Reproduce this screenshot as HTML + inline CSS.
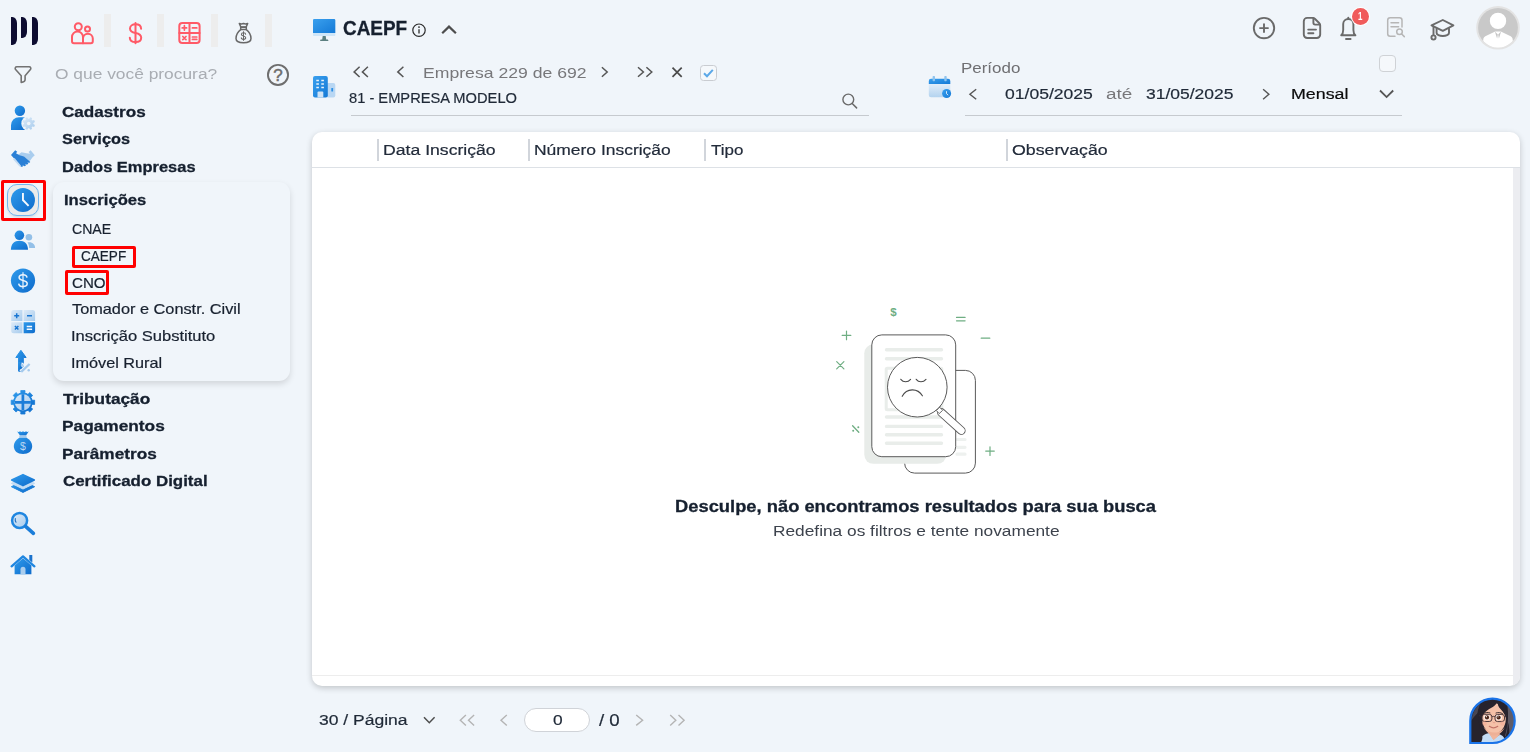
<!DOCTYPE html>
<html lang="pt-BR">
<head>
<meta charset="utf-8">
<title>CAEPF</title>
<style>
*{box-sizing:border-box;margin:0;padding:0}
html,body{width:1530px;height:752px;overflow:hidden;background:#f0f5fa;font-family:"Liberation Sans",sans-serif;color:#1b2536}
.abs{position:absolute}
.t{position:absolute;white-space:nowrap;line-height:1;transform-origin:0 0}
.redbox{position:absolute;border:3px solid #ff0000;border-radius:2px}
.colsep{position:absolute;top:138.5px;width:2px;height:22px;background:#d1d5db}
.qsep{position:absolute;top:14px;width:7px;height:33px;background:#ededed}
svg{position:absolute;overflow:visible}
.lg{position:absolute;background:#0d0c30;top:17px;width:6px;border-radius:0 4.6px 4.6px 0 / 0 6px 6px 0}
</style>
</head>
<body>
<!-- logo -->
<div class="lg" style="left:11px;height:28px"></div>
<div class="lg" style="left:21.2px;height:21px;width:6.2px"></div>
<div class="lg" style="left:32px;height:28px"></div>

<!-- quick separators -->
<div class="qsep" style="left:103.5px"></div>
<div class="qsep" style="left:157px"></div>
<div class="qsep" style="left:211px"></div>
<div class="qsep" style="left:265px"></div>

<!--QUICKICONS-->
<svg style="left:0;top:0" width="1530" height="752" viewBox="0 0 1530 752" fill="none">
<defs>
<linearGradient id="gb" x1="0" y1="0" x2="1" y2="1"><stop offset="0" stop-color="#2f9bec"/><stop offset="1" stop-color="#0f6ccc"/></linearGradient>
<linearGradient id="gl" x1="0" y1="0" x2="1" y2="1"><stop offset="0" stop-color="#dbe9f7"/><stop offset="1" stop-color="#a9cdee"/></linearGradient>
</defs>
<!-- people -->
<g stroke="#ff5a67" stroke-width="2" stroke-linejoin="round" stroke-linecap="round">
<circle cx="78.3" cy="26.8" r="3.5"/>
<path d="M72 41.2V37a5.5 5.5 0 0 1 11 0v6.2H74a2 2 0 0 1-2-2Z"/>
<circle cx="87.5" cy="29.1" r="2.5"/>
<path d="M83 38.6a4.9 4.9 0 0 1 9.8 0v2.6a2 2 0 0 1-2 2H83"/>
<!-- dollar -->
<path d="M135.5 22.9V43.3"/>
<path d="M141.1 28.7C141 25.6 138.6 24.3 135.5 24.3C132.3 24.3 130 26 130 28.6C130 31.5 132.5 32.5 135.5 33.1C138.8 33.8 141.2 34.9 141.2 37.8C141.2 40.5 138.8 42.1 135.5 42.1C132.2 42.1 129.9 40.6 129.8 37.7"/>
<!-- calculator -->
<rect x="179.3" y="22.9" width="20.3" height="20.2" rx="3"/>
<path d="M189.5 22.9V43.1M179.3 33H199.6"/>
<path d="M182.2 27.9h4.4M184.4 25.7v4.4M192.4 27.9h4.4M182.8 36.5l3.2 3.2M186 36.5l-3.2 3.2M192.4 37h4.4M192.4 39.4h4.4" stroke-width="1.7"/>
</g>
<!-- money bag (gray) -->
<g stroke="#686868" stroke-width="1.5" stroke-linejoin="round" stroke-linecap="round">
<path d="M239.3 23.5c1.5.6 2.8.6 4.2 0c1.400.6 2.700.6 4.200 0l-1.600 3.600h-5.200Z"/>
<path d="M240.700 27.300h5.600v2.300h-5.600Z"/>
<path d="M240.7 29.6c-2.800 2.200-4.700 5.600-4.700 8.900c0 2.800 2.200 4.200 7.500 4.200s7.500-1.400 7.500-4.200c0-3.300-1.900-6.700-4.700-8.900"/>
<path d="M243.5 31.7v8.700" stroke-width="1"/>
<path d="M245.6 34.300c0-1-.9-1.500-2.100-1.500s-2.100.6-2.100 1.600c0 2.200 4.300 1.100 4.300 3.400c0 1-.9 1.600-2.200 1.600s-2.200-.6-2.200-1.600" stroke-width="1.100"/>
</g>
<!-- filter -->
<path d="M16.800 66.800H29.200a1.600 1.600 0 0 1 1.200 2.700L25.100 75.700V79.500c0 1.600-1.800 2.700-3.900 2.900V75.700L15.600 69.500a1.600 1.600 0 0 1 1.200-2.700Z" stroke="#737373" stroke-width="1.600" stroke-linejoin="round"/>
<!-- help -->
<circle cx="278" cy="74.900" r="10.050" stroke="#6e6e6e" stroke-width="1.900"/>
<text x="278" y="81.100" font-family="Liberation Sans, sans-serif" font-size="17" fill="#6e6e6e" stroke="#6e6e6e" stroke-width=".5" text-anchor="middle">?</text>
</svg>


<svg style="left:0;top:0" width="1530" height="752" viewBox="0 0 1530 752" fill="none">
<defs>
<linearGradient id="sb" x1="0" y1="0" x2="1" y2="1"><stop offset="0" stop-color="#2f9bec"/><stop offset="1" stop-color="#0e6bcb"/></linearGradient>
<linearGradient id="sl" x1="0" y1="0" x2="1" y2="1"><stop offset="0" stop-color="#deebf8"/><stop offset="1" stop-color="#a6cbed"/></linearGradient>
<filter id="bsh" x="-30%" y="-30%" width="160%" height="170%"><feGaussianBlur stdDeviation="1.6"/></filter>
</defs>
<!-- user gear -->
<circle cx="19.9" cy="110.800" r="5.200" fill="url(#sb)"/>
<path d="M11 130v-4.800a8 8 0 0 1 8-8h3.500c1.500 0 2.800.4 3.900 1.100L26.400 130Z" fill="url(#sb)"/>
<circle cx="28.700" cy="123.500" r="7.400" fill="#f0f5fa"/>
<path d="M33.36 124.09L34.93 124.95L34.13 126.89L32.41 126.38L31.58 127.21L32.09 128.93L30.15 129.73L29.29 128.16L28.11 128.16L27.25 129.73L25.31 128.93L25.82 127.21L24.99 126.38L23.27 126.89L22.47 124.95L24.04 124.09L24.04 122.91L22.47 122.05L23.27 120.11L24.99 120.62L25.82 119.79L25.31 118.07L27.25 117.27L28.11 118.84L29.29 118.84L30.15 117.27L32.09 118.07L31.58 119.79L32.41 120.62L34.13 120.11L34.93 122.05L33.36 122.91Z" fill="url(#sl)"/>
<circle cx="28.700" cy="123.500" r="1.800" fill="#f0f5fa"/>
<!-- handshake -->
<path d="M34.800 155.200L30.600 150.200L28.600 151.900L30 153.700L26.500 153.200L21.500 152.300L17.500 155.200L23.500 156.700L29.300 161.800L32.600 157.200Z" fill="#a9cdee"/>
<path d="M11 155L15.200 150.200L17.200 151.700L16 153.200L19.500 155.300L24 156.400L30.300 161.900L29 163L27.500 162L28.300 163.700L26.800 164.800L25.300 163.800L26 165.500L24.300 166.300L22.800 165.200L22.700 166.800L21 166.700L13 157.300Z" fill="#2a80d6"/>
<path d="M13 159.200L14.600 158L21 165.800L19.500 166.500Z" fill="#c3dbf2"/>
<!-- clock button -->
<rect x="8" y="187" width="30" height="30" rx="9" fill="#9aa3ad" opacity=".45" filter="url(#bsh)"/>
<rect x="7.500" y="184.500" width="31" height="31" rx="9.500" fill="#ebebeb" stroke="#72b5ee" stroke-width="1"/>
<circle cx="22.950" cy="199.950" r="12" fill="url(#sb)"/>
<path d="M22.950 193V200L28.600 205.800" stroke="#f4f9fe" stroke-width="1.900" stroke-linejoin="miter"/>
<!-- users -->
<circle cx="28.900" cy="237.300" r="3.300" fill="#93c0e8"/>
<path d="M27.500 242.300c4.800-.8 7.600 1.800 7.600 5.700H29.200c-.2-2.400-.7-4.200-1.700-5.700Z" fill="#93c0e8"/>
<circle cx="19.400" cy="235.300" r="4.800" fill="url(#sb)"/>
<path d="M10.900 249.800c0-6 3.400-9.100 8.500-9.100s8.600 3.100 8.600 9.100Z" fill="url(#sb)"/>
<!-- dollar circle -->
<circle cx="23" cy="280.600" r="12.100" fill="url(#sb)"/>
<path d="M23 272.300V288.700" stroke="#eaf3fc" stroke-width="1.200"/>
<path d="M27 277.600c-.2-1.900-1.700-2.900-4-2.900s-3.900 1.100-3.900 2.900c0 3.900 8.100 1.900 8.100 6c0 1.900-1.700 3-4.200 3s-4.100-1.100-4.300-3" stroke="#eaf3fc" stroke-width="1.500"/>
<!-- calc -->
<path d="M13.700 310h8.700v11H11.200v-8.500a2.500 2.500 0 0 1 2.500-2.500Z" fill="url(#sl)"/>
<path d="M23.600 310h9a2.500 2.500 0 0 1 2.500 2.500V321H23.600Z" fill="url(#sl)"/>
<path d="M11.200 322.200h11.200v11.100H13.700a2.500 2.500 0 0 1-2.500-2.500Z" fill="url(#sl)"/>
<path d="M23.600 322.200h11.500v8.600a2.500 2.500 0 0 1-2.500 2.500H23.600Z" fill="url(#sb)"/>
<path d="M14.200 315.700h5M16.700 313.200v5M27 315.700h5M14.900 326l3.500 3.500M18.400 326l-3.500 3.500" stroke="#1976d2" stroke-width="1.500"/>
<path d="M26.700 326.500h5.400M26.700 329.200h5.400" stroke="#f4f9fe" stroke-width="1.500"/>
<!-- arrow percent -->
<path d="M20.900 350.300L26.100 357.500H23.300V371.200H18.600V357.500H15.800Z" fill="url(#sb)" stroke="url(#sb)" stroke-width="1" stroke-linejoin="round"/>
<path d="M21 372L29.700 364" stroke="#f0f5fa" stroke-width="4.600"/>
<circle cx="21.700" cy="364.800" r="2.300" fill="#f0f5fa"/>
<path d="M18.500 362h3v7h-3Z" fill="url(#sb)"/>
<path d="M21.200 371.800L29.600 364" stroke="#a3c9ec" stroke-width="2.300"/>
<circle cx="21.900" cy="364.900" r="1.200" fill="#a3c9ec"/>
<circle cx="28.700" cy="370.200" r="1.200" fill="#a3c9ec"/>
<!-- gear cross -->
<path d="M31.99 400.34L34.61 400.16L34.61 404.44L31.99 404.26L30.71 407.34L32.69 409.07L29.67 412.09L27.94 410.11L24.86 411.39L25.04 414.01L20.76 414.01L20.94 411.39L17.86 410.11L16.13 412.09L13.11 409.07L15.09 407.34L13.81 404.26L11.19 404.44L11.19 400.16L13.81 400.34L15.09 397.26L13.11 395.53L16.13 392.51L17.86 394.49L20.94 393.21L20.76 390.59L25.04 390.59L24.86 393.21L27.94 394.49L29.67 392.51L32.69 395.53L30.71 397.26Z" fill="url(#sb)" stroke="url(#sb)" stroke-width=".8" stroke-linejoin="round"/>
<circle cx="22.900" cy="402.300" r="9.700" fill="url(#sb)"/>
<circle cx="22.900" cy="402.300" r="8.100" fill="url(#sl)"/>
<path d="M22.900 394.300V410.300M14.900 402.300H30.900" stroke="#1b7dd9" stroke-width="2.700"/>

<!-- money bag -->
<path d="M17 431.300c1.100 .8 2 .8 3 0c1 .8 2 .8 3 0c1 .8 2 .8 3 0c1 .8 1.900 .8 2.900 0L26 435.500H20Z" fill="url(#sb)"/>
<path d="M19.300 435.500h7.300v2.200h-7.300Z" fill="#a3c9ec"/>
<path d="M19.300 437.700h7.300c3.600 2 5.600 5 5.600 8.300c0 5-3.600 8-9.200 8s-9.200-3-9.200-8c0-3.300 2-6.300 5.500-8.300Z" fill="url(#sb)"/>
<text x="23" y="450.300" font-family="Liberation Sans, sans-serif" font-size="10.500" fill="#b9d7f3" text-anchor="middle">$</text>
<!-- layers -->
<path d="M23 481.200L34.600 486.700L23 492.400L11.400 486.700Z" fill="url(#sb)" stroke="url(#sb)" stroke-width="1" stroke-linejoin="round"/>
<path d="M23 477.800L34.600 483.400L23 489L11.400 483.400Z" fill="#c3dcf4" stroke="#c3dcf4" stroke-width="1" stroke-linejoin="round"/>
<path d="M23 474.600L34.300 480L23 485.600L11.700 480Z" fill="url(#sb)" stroke="url(#sb)" stroke-width="1.600" stroke-linejoin="round"/>
<!-- magnifier -->
<circle cx="19.600" cy="520.500" r="7.500" fill="url(#sl)" stroke="#1f86e0" stroke-width="2.500"/>
<path d="M15.300 518.500c-.3 1.400 0 2.600 .7 3.700" stroke="#1f6fc0" stroke-width="1.100" stroke-linecap="round"/>
<path d="M25.600 526.300L33.400 533.300" stroke="#1b7dd9" stroke-width="3.600" stroke-linecap="round"/>
<!-- home -->
<path d="M29.300 555h3v7.500l-3-2.600Z" fill="#1b72cc"/>
<path d="M14.600 565.600L23 558.300L31.400 565.600V574.200H14.600Z" fill="url(#sb)"/>
<path d="M11.600 566.300L23 556.400L34.400 566.300" stroke="#1f86e0" stroke-width="2.300" stroke-linecap="round" stroke-linejoin="round"/>
<path d="M20.500 574.200v-5a2.500 2.500 0 0 1 5 0v5Z" fill="#a9cdee"/>
</svg>


<!-- submenu card -->
<div class="abs" style="left:53px;top:182px;width:237px;height:199px;border-radius:11px;background:#f0f5fa;box-shadow:0 3px 6px rgba(0,0,0,.13)"></div>
<div class="redbox" style="left:72px;top:246px;width:64px;height:22px"></div>
<div class="redbox" style="left:65px;top:270px;width:44px;height:25px"></div>
<div class="redbox" style="left:1px;top:180px;width:45px;height:41px"></div>

<div class="abs" style="left:700px;top:65px;width:16.5px;height:16px;border:1px solid #c9ccd1;border-radius:3.5px;background:#f5f8fb"></div>
<div class="abs" style="left:1379px;top:55px;width:17px;height:17px;border:1px solid #cfd2d6;border-radius:4px;background:#f5f8fb"></div>
<svg style="left:0;top:0" width="1530" height="752" viewBox="0 0 1530 752" fill="none">
<defs>
<linearGradient id="gmon" x1="0" y1="0" x2="1" y2="1"><stop offset="0" stop-color="#3aa0ee"/><stop offset="1" stop-color="#1479d6"/></linearGradient>
<linearGradient id="gcal" x1="0" y1="0" x2="0" y2="1"><stop offset="0" stop-color="#e3eefa"/><stop offset="1" stop-color="#b3d3ef"/></linearGradient>
<clipPath id="avc"><circle cx="1498" cy="27.800" r="19.900"/></clipPath>
</defs>
<!-- monitor -->
<path d="M320 40.900h8.500l-.6-1.300h-1.700l-.5-3.600h-3l-.5 3.600h-1.600Z" fill="#5b7f80"/>
<rect x="313" y="19.100" width="22.300" height="17" rx="1.200" fill="#cfe6f8"/>
<path d="M313 20.300a1.200 1.200 0 0 1 1.200-1.200h19.900a1.200 1.200 0 0 1 1.200 1.200V33H313Z" fill="url(#gmon)"/>
<!-- info -->
<circle cx="419" cy="30.200" r="6.200" stroke="#2b2b2b" stroke-width="1.200"/>
<circle cx="419" cy="27.100" r=".9" fill="#2b2b2b"/>
<path d="M419 29.300V33.500" stroke="#2b2b2b" stroke-width="1.300"/>
<!-- caret up -->
<path d="M442.200 33.200L449 26.600L455.900 33.200" stroke="#4d4d4d" stroke-width="2.200"/>
<!-- building -->
<rect x="326" y="83" width="9.300" height="14.500" rx="2" fill="#b9d7f3"/>
<rect x="331.300" y="88" width="1.800" height="3.400" rx=".5" fill="#2a8fe6"/>
<rect x="313" y="76" width="14.800" height="21.500" rx="2" fill="url(#gmon)"/>
<path d="M316.300 79.800h2.600v1.500h-2.600ZM321.300 79.800h2.600v1.500h-2.600ZM316.300 83.300h2.600v1.500h-2.600ZM321.300 83.300h2.600v1.500h-2.600ZM316.300 86.800h2.600v1.500h-2.600ZM321.300 86.800h2.600v1.500h-2.600Z" fill="#eaf3fb"/>
<path d="M317.500 97.500v-5a1 1 0 0 1 1-1h3.800a1 1 0 0 1 1 1v5Z" fill="#cfe3f6"/>
<!-- nav chevrons -->
<g stroke="#555" stroke-width="1.500">
<path d="M359.600 66.800L354.100 71.900L359.600 77M367.900 66.800L362.400 71.900L367.900 77"/>
<path d="M403.400 66.800L397.800 71.900L403.400 77"/>
<path d="M601.900 67.200L607.200 72L601.900 76.800"/>
<path d="M638 67.200L643.400 72L638 76.800M646.400 67.200L651.800 72L646.400 76.800"/>
<path d="M672.500 67.700L681.700 76.800M681.700 67.700L672.500 76.800" stroke-width="1.700" stroke="#4a4a4a"/>
</g>
<path d="M704 73.200L707 76.200L712.800 69.900" stroke="#5ba8e8" stroke-width="2"/>
<!-- search -->
<circle cx="848.300" cy="99.500" r="5.400" stroke="#6a6a6a" stroke-width="1.400"/>
<path d="M852.200 103.500L856.600 107.900" stroke="#6a6a6a" stroke-width="1.500" stroke-linecap="round"/>
<!-- calendar -->
<path d="M928.800 83.500H950.300V95a2.200 2.200 0 0 1-2.200 2.200H931a2.200 2.200 0 0 1-2.200-2.200Z" fill="url(#gcal)"/>
<path d="M928.800 81a2.200 2.200 0 0 1 2.200-2.200h17.100a2.200 2.200 0 0 1 2.200 2.200V84H928.800Z" fill="url(#gmon)"/>
<rect x="932.600" y="76" width="2.400" height="5.200" rx=".8" fill="#8ec3ee"/>
<rect x="944.300" y="76" width="2.400" height="5.200" rx=".8" fill="#8ec3ee"/>
<circle cx="946.600" cy="93.500" r="4.500" fill="url(#gmon)"/>
<path d="M946.500 91.200V93.700L948.200 95.200" stroke="#e8f2fc" stroke-width=".9"/>
<!-- period arrows -->
<g stroke="#555" stroke-width="1.400">
<path d="M976.200 89.200L969.900 94.200L976.200 99.300"/>
<path d="M1263.100 89.200L1268.900 94.200L1263.100 99.300"/>
<path d="M1380 90.500L1386.600 97.100L1393.200 90.500" stroke-width="1.800" stroke="#555"/>
</g>
<!-- top right -->
<g stroke="#6a6a6a" stroke-width="1.900" stroke-linecap="round" stroke-linejoin="round">
<circle cx="1264" cy="28.100" r="10.200"/>
<path d="M1260 28.100H1268M1264 24.100V32.100"/>
<path d="M1307.200 17.900H1312.500c1 0 1.900.4 2.600 1.100l4 4c.7.700 1.100 1.600 1.100 2.600V34.600a3.400 3.400 0 0 1-3.400 3.400H1307.200a3.400 3.400 0 0 1-3.400-3.400V21.300a3.400 3.400 0 0 1 3.400-3.400Z"/>
<path d="M1313.400 18.300V22.800a1.800 1.800 0 0 0 1.800 1.800H1319.800"/>
<path d="M1308.200 29.600H1316M1308.200 33.300H1313.400"/>
<path d="M1341.200 35.300c1.500-1.200 2-2.900 2-5.300V24a5.100 5.100 0 0 1 10.200 0v6c0 2.400.5 4.100 2 5.300Z"/>
<path d="M1348.300 17.600V18.800M1346 39H1350.600"/>
<path d="M1431.500 25.400L1442.800 20L1453.400 25.400L1442.800 30.900Z"/>
<path d="M1436.600 28.400V33c0 1.600 2.800 3 6.200 3s6.200-1.400 6.200-3V28.400"/>
<path d="M1433.500 26.600V35"/>
<circle cx="1433.500" cy="37.500" r="2.100"/>
</g>
<g stroke="#b6b6b6" stroke-width="1.500" stroke-linecap="round" stroke-linejoin="round">
<path d="M1395 36.300H1390.200a2.500 2.500 0 0 1-2.500-2.500V20.300a2.500 2.500 0 0 1 2.500-2.500H1399.500a2.500 2.500 0 0 1 2.500 2.500V27"/>
<path d="M1391 22.800H1398.600M1391 26.700H1398.600"/>
<circle cx="1399.500" cy="31.800" r="2.800"/>
<path d="M1401.700 34L1404.300 36.600"/>
</g>
<!-- badge -->
<circle cx="1360.500" cy="16.500" r="9.600" fill="#fff"/>
<circle cx="1360.500" cy="16.500" r="8.500" fill="#f05b5b"/>
<!-- avatar -->
<circle cx="1498" cy="27.800" r="21.800" fill="#e3e3e3"/>
<circle cx="1498" cy="27.800" r="19.900" fill="#c9c9c9"/>
<g clip-path="url(#avc)">
<circle cx="1498" cy="20.900" r="8.200" fill="#fff"/>
<path d="M1483.200 50V40.300c0-2.300 1.300-3.800 3.700-4.700l8.300-4.100h5.600l8.300 4.100c2.400.9 3.700 2.400 3.700 4.700V50Z" fill="#fff"/>
<path d="M1494.900 31.400l2.200 7.200l.7-4.200Z" fill="#c4c4c4"/>
<path d="M1501.100 31.400l-2.200 7.200l-.7-4.200Z" fill="#c4c4c4"/>
</g>
</svg>


<!-- company / period lines -->
<div class="abs" style="left:351px;top:115px;width:518px;height:1px;background:#c6cacf"></div>
<div class="abs" style="left:965px;top:115px;width:437px;height:1px;background:#c6cacf"></div>

<!-- TABLE CARD -->
<div class="abs" style="left:312px;top:132px;width:1208px;height:554px;background:#fff;border-radius:10px;box-shadow:0 2px 6px rgba(0,0,0,.2);overflow:hidden">
<div class="abs" style="left:0;top:35px;width:1208px;height:1px;background:#dde1e6"></div>
<div class="abs" style="left:1201px;top:36px;width:7px;height:520px;background:#ecedf1"></div>
<div class="abs" style="left:0;top:543px;width:1201px;height:1px;background:#ededed"></div>
</div>
<div class="colsep" style="left:377px"></div>
<div class="colsep" style="left:528px"></div>
<div class="colsep" style="left:704px"></div>
<div class="colsep" style="left:1006px"></div>

<svg style="left:0;top:0" width="1530" height="752" viewBox="0 0 1530 752" fill="none">
<defs><clipPath id="asc"><path d="M1470.300 720.800a22.200 22.200 0 1 1 22.200 22.200h-22.200Z"/></clipPath></defs>
<!-- back doc -->
<rect x="904.600" y="370.400" width="70.800" height="102.700" rx="10" fill="#fff" stroke="#5a5a5a" stroke-width="1"/>
<path d="M957 439.500h8M957 447.300h8M957 454.200h8" stroke="#eef1ef" stroke-width="3.200" stroke-linecap="round"/>
<!-- shadow -->
<rect x="864.300" y="344.300" width="82" height="119.500" rx="9" fill="#e8ece9"/>
<!-- front doc -->
<rect x="871.800" y="334.900" width="83.900" height="121.800" rx="10" fill="#fff" stroke="#5a5a5a" stroke-width="1"/>
<g stroke="#e9edea" stroke-width="3.400" stroke-linecap="round">
<path d="M886.500 349.800H941.500M886.500 358.700H941.500M886.500 417H941.500M886.500 426.400H941.500M886.500 434.700H941.500M886.500 443.300H941.500"/>
</g>
<rect x="886.200" y="368.200" width="55.600" height="41.600" rx="1" stroke="#e9edea" stroke-width="3"/>
<!-- handle -->
<path d="M937.200 409.600L940.600 406.300" stroke="#5a5a5a" stroke-width="1"/>
<path d="M941.300 412.400L961.300 430.600" stroke="#5a5a5a" stroke-width="8.600" stroke-linecap="round"/>
<path d="M941.300 412.400L961.300 430.600" stroke="#fff" stroke-width="6.800" stroke-linecap="round"/>
<path d="M936.300 410.500L939.200 413.600L942.700 410.300L939.600 407.200Z" fill="#fff" stroke="#5a5a5a" stroke-width=".9"/>
<!-- lens -->
<circle cx="917.300" cy="387.200" r="29.800" fill="#fff" stroke="#5a5a5a" stroke-width="1"/>
<g stroke="#4a4a4a" stroke-width="1.100" stroke-linecap="round">
<path d="M900.800 379.300c2.500 3.200 7 3.200 9.800 0"/>
<path d="M916.200 379.300c2.500 3.200 7 3.200 9.800 0"/>
<path d="M902.200 396.300c4.500-8.500 15.500-8.500 20.200-.5"/>
</g>
<!-- green symbols -->
<g stroke="#6fae83" stroke-width="1.200" stroke-linecap="round">
<path d="M842.200 335.400h8.600M846.500 331.100v8.600"/>
<path d="M981.200 338.200h8.600"/>
<path d="M956.500 317.400h8.600M956.500 320.800h8.600"/>
<path d="M836.700 361.600l7.200 7.200M843.900 361.600l-7.200 7.200"/>
<path d="M985.700 451.100h8.600M990 446.800v8.600"/>
<path d="M852.600 425.700l6.200 6.600" stroke-width="1.300"/>
</g>
<circle cx="853.200" cy="430.700" r="1" fill="#6fae83"/>
<circle cx="858.300" cy="427.300" r="1" fill="#6fae83"/>
<text x="893.500" y="316.300" font-family="Liberation Sans, sans-serif" font-size="11.500" font-weight="700" fill="#6fae83" text-anchor="middle">$</text>
<!-- assistant -->
<g clip-path="url(#asc)">
<rect x="1466" y="695" width="54" height="52" fill="#27232d"/>
<path d="M1507 703c5 5 8 12 8 20c0 6-2 12-5 16l-5-3c3-10 4-22 2-33Z" fill="#5f5b66"/>
<path d="M1471 722c1-8 4-14 9-18c-3 7-4 15-3 24Z" fill="#4a4651"/>
<path d="M1488.500 728h10v15h-10Z" fill="#eaa78c"/>
<path d="M1477 744.500l4-7.500c3-2.500 5.500-3.500 8-3.800l4.500 6.800l6.500-5.500c2 .8 3.500 2 4.500 4l1.500 6Z" fill="#c3dcf5"/>
<path d="M1489 733.200l4.500 6.800l6.500-5.500l-1-1.500c-3 2.500-7 2.500-10 .2Z" fill="#f0b59c"/>
<ellipse cx="1494" cy="718.400" rx="11.800" ry="15.400" fill="#f5c1a8"/>
<path d="M1483.500 727c3 6 8 8.500 11 8.500s8-2.500 10.500-8.500c-2 3.500-6 5.500-10.500 5.500s-8.500-2-11-5.500Z" fill="#eeb096"/>
<path d="M1497.500 701.500c-7-1-14 3-16.500 10c-1 3-1.200 6-1 9c2-6 6-10 11-12.500c3-1.500 5.500-3.800 6.500-6.500Z" fill="#27232d"/>
<path d="M1497.500 701.500c4 1 8.500 5 10 11.500c.5 3 .3 6-.5 9c-1-6-3.500-10-6.500-13c-2-2-3-4.500-3-7.500Z" fill="#27232d"/>
<path d="M1470 745v-22c2-4 5-8 9-11c-1 8 0 16 3 23c1 3 0 7-3 10Z" fill="#27232d"/>
<path d="M1505 738c2-5 3-11 2.500-17c2 5 2.500 12 1 18Z" fill="#27232d"/>
<ellipse cx="1486.800" cy="717.300" rx="3.200" ry="2.900" fill="#fbeee8"/>
<ellipse cx="1498.800" cy="717.400" rx="3.200" ry="2.900" fill="#fbeee8"/>
<circle cx="1487" cy="717.400" r="2.100" fill="#4a2418"/>
<circle cx="1498.600" cy="717.500" r="2.100" fill="#4a2418"/>
<circle cx="1486.400" cy="716.700" r=".6" fill="#fff"/>
<circle cx="1498" cy="716.800" r=".6" fill="#fff"/>
<path d="M1483.500 713.500c2-1.200 4.500-1.400 6.500-.6M1496 713c2-.8 4.500-.6 6.500.6" stroke="#2b2228" stroke-width=".9" stroke-linecap="round"/>
<g stroke="#3b2b32" stroke-width=".9">
<rect x="1481.900" y="714.300" width="10" height="7.200" rx="2.600"/>
<rect x="1495" y="714.400" width="9.500" height="7.200" rx="2.600"/>
<path d="M1491.900 716.800c1-.6 2.100-.6 3.100 0M1481.900 716.500l-3-1M1504.500 716.500l2.500-1"/>
</g>
<path d="M1493 722.300c.6.600 1.600.6 2.200 0" stroke="#e29a84" stroke-width=".9" stroke-linecap="round"/>
<path d="M1489.300 726.300c2.500 1.800 6 1.800 8.500 0" stroke="#c47568" stroke-width="1.100" stroke-linecap="round"/>
<circle cx="1484.500" cy="723.500" r="2.200" fill="#f2a994" opacity=".55"/>
<circle cx="1502.500" cy="723.500" r="2.200" fill="#f2a994" opacity=".55"/>
</g>
<path d="M1470.300 720.800a22.200 22.200 0 1 1 22.200 22.200h-22.200Z" stroke="#1a73e8" stroke-width="2.200"/>
</svg>


<!-- pagination pill -->
<div class="abs" style="left:524.4px;top:708px;width:65.3px;height:23.6px;border:1px solid #d0d3d8;border-radius:12px;background:#fff"></div>

<svg style="left:0;top:0" width="1530" height="752" viewBox="0 0 1530 752" fill="none">
<path d="M424 717.300L429.300 722.700L434.600 717.300" stroke="#4d4d4d" stroke-width="1.500"/>
<g stroke="#b4b4b4" stroke-width="1.400">
<path d="M465.900 715L460.300 720.200L465.900 725.400M474.100 715L468.500 720.200L474.100 725.400"/>
<path d="M506.800 715L501 720.200L506.800 725.400"/>
<path d="M636.200 715L642.600 720.200L636.200 725.400"/>
<path d="M670.200 715L675.800 720.200L670.200 725.400M678.500 715L684.100 720.200L678.500 725.400"/>
</g>
</svg>


<div class="t" style="left:62.0px;top:103.9px;font-size:15.5px;font-weight:700;-webkit-text-stroke:0.3px currentColor;color:#16202f;transform:scaleX(1.1037)">Cadastros</div>
<div class="t" style="left:62.1px;top:130.5px;font-size:15.5px;font-weight:700;-webkit-text-stroke:0.3px currentColor;color:#16202f;transform:scaleX(1.0520)">Serviços</div>
<div class="t" style="left:61.5px;top:158.9px;font-size:15.5px;font-weight:700;-webkit-text-stroke:0.3px currentColor;color:#16202f;transform:scaleX(1.0616)">Dados Empresas</div>
<div class="t" style="left:63.5px;top:191.8px;font-size:15.5px;font-weight:700;-webkit-text-stroke:0.3px currentColor;color:#16202f;transform:scaleX(1.0733)">Inscrições</div>
<div class="t" style="left:71.7px;top:222.0px;font-size:14.4px;-webkit-text-stroke:0.2px currentColor;color:#18212f;transform:scaleX(0.9781)">CNAE</div>
<div class="t" style="left:80.9px;top:248.8px;font-size:14.4px;-webkit-text-stroke:0.2px currentColor;color:#18212f;transform:scaleX(0.9412)">CAEPF</div>
<div class="t" style="left:71.6px;top:275.5px;font-size:14.4px;-webkit-text-stroke:0.2px currentColor;color:#18212f;transform:scaleX(1.0492)">CNO</div>
<div class="t" style="left:72.1px;top:302.0px;font-size:14.4px;-webkit-text-stroke:0.2px currentColor;color:#18212f;transform:scaleX(1.1329)">Tomador e Constr. Civil</div>
<div class="t" style="left:71.0px;top:328.6px;font-size:14.4px;-webkit-text-stroke:0.2px currentColor;color:#18212f;transform:scaleX(1.1491)">Inscrição Substituto</div>
<div class="t" style="left:71.0px;top:355.6px;font-size:14.4px;-webkit-text-stroke:0.2px currentColor;color:#18212f;transform:scaleX(1.1287)">Imóvel Rural</div>
<div class="t" style="left:62.7px;top:390.7px;font-size:15.5px;font-weight:700;-webkit-text-stroke:0.3px currentColor;color:#16202f;transform:scaleX(1.1123)">Tributação</div>
<div class="t" style="left:61.9px;top:417.9px;font-size:15.5px;font-weight:700;-webkit-text-stroke:0.3px currentColor;color:#16202f;transform:scaleX(1.1149)">Pagamentos</div>
<div class="t" style="left:61.9px;top:445.5px;font-size:15.5px;font-weight:700;-webkit-text-stroke:0.3px currentColor;color:#16202f;transform:scaleX(1.1104)">Parâmetros</div>
<div class="t" style="left:62.5px;top:472.8px;font-size:15.5px;font-weight:700;-webkit-text-stroke:0.3px currentColor;color:#16202f;transform:scaleX(1.0901)">Certificado Digital</div>
<div class="t" style="left:55.1px;top:65.9px;font-size:15.5px;color:#a9adb3;transform:scaleX(1.1206)">O que você procura?</div>
<div class="t" style="left:342.8px;top:18.9px;font-size:19.5px;font-weight:700;-webkit-text-stroke:0.3px currentColor;color:#16202f;transform:scaleX(0.9699)">CAEPF</div>
<div class="t" style="left:422.5px;top:65.2px;font-size:15px;color:#77777a;transform:scaleX(1.1752)">Empresa 229 de 692</div>
<div class="t" style="left:348.8px;top:91.3px;font-size:14.5px;-webkit-text-stroke:0.2px currentColor;color:#1f2937;transform:scaleX(1.0118)">81 - EMPRESA MODELO</div>
<div class="t" style="left:961.3px;top:60.3px;font-size:15px;color:#6f6f72;transform:scaleX(1.1291)">Período</div>
<div class="t" style="left:1005.3px;top:86.4px;font-size:15.5px;-webkit-text-stroke:0.2px currentColor;color:#1f2937;transform:scaleX(1.1320)">01/05/2025</div>
<div class="t" style="left:1105.8px;top:86.4px;font-size:15.5px;color:#77777a;transform:scaleX(1.2198)">até</div>
<div class="t" style="left:1145.5px;top:86.4px;font-size:15.5px;-webkit-text-stroke:0.2px currentColor;color:#1f2937;transform:scaleX(1.1281)">31/05/2025</div>
<div class="t" style="left:1291.0px;top:85.9px;font-size:15.5px;-webkit-text-stroke:0.2px currentColor;color:#0c0c0c;transform:scaleX(1.1497)">Mensal</div>
<div class="t" style="left:382.8px;top:141.7px;font-size:15.5px;-webkit-text-stroke:0.2px currentColor;color:#222b3a;transform:scaleX(1.1373)">Data Inscrição</div>
<div class="t" style="left:533.9px;top:141.7px;font-size:15.5px;-webkit-text-stroke:0.2px currentColor;color:#222b3a;transform:scaleX(1.1255)">Número Inscrição</div>
<div class="t" style="left:710.7px;top:141.7px;font-size:15.5px;-webkit-text-stroke:0.2px currentColor;color:#222b3a;transform:scaleX(1.0922)">Tipo</div>
<div class="t" style="left:1011.8px;top:141.7px;font-size:15.5px;-webkit-text-stroke:0.2px currentColor;color:#222b3a;transform:scaleX(1.1453)">Observação</div>
<div class="t" style="left:674.9px;top:497.9px;font-size:17px;font-weight:700;-webkit-text-stroke:0.3px currentColor;color:#16202f;transform:scaleX(1.0787)">Desculpe, não encontramos resultados para sua busca</div>
<div class="t" style="left:772.6px;top:522.9px;font-size:15.5px;color:#3d434d;transform:scaleX(1.1160)">Redefina os filtros e tente novamente</div>
<div class="t" style="left:318.6px;top:711.9px;font-size:15.5px;-webkit-text-stroke:0.2px currentColor;color:#1f2937;transform:scaleX(1.1295)">30 / Página</div>
<div class="t" style="left:552.5px;top:711.9px;font-size:15.5px;-webkit-text-stroke:0.2px currentColor;color:#1f2937;transform:scaleX(1.1200)">0</div>
<div class="t" style="left:598.9px;top:712.9px;font-size:16px;-webkit-text-stroke:0.2px currentColor;color:#1f2937;transform:scaleX(1.1652)">/ 0</div>
<div class="t" style="left:1358.4px;top:11.1px;font-size:11px;font-weight:700;color:#ffffff;transform:scaleX(0.7200)">1</div>

<!--ASSISTANT-->
</body>
</html>
